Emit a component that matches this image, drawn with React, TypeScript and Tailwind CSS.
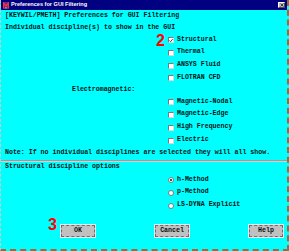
import React from 'react'

const txt = "font-['Liberation_Mono',monospace] font-bold text-[6.6px] leading-none text-[#001414] whitespace-nowrap"

const CheckBox = ({ checked = false }: { checked?: boolean }) => (
  <span className="w-[6px] h-[6px] bg-white border-t border-l border-[#7a7a7a] border-r border-b border-r-[#d8d8d8] border-b-[#d8d8d8] flex items-center justify-center shrink-0">
    {checked && (
      <svg width="5" height="5" viewBox="0 0 5 5">
        <path d="M0.5 2.5 L2 4 L4.5 0.8" stroke="#101010" strokeWidth="1" fill="none" />
      </svg>
    )}
  </span>
)

const Radio = ({ on = false }: { on?: boolean }) => (
  <span className="w-[6px] h-[6px] rounded-full bg-white border border-[#7a7a7a] flex items-center justify-center shrink-0">
    {on && <span className="w-[2px] h-[2px] rounded-full bg-[#101010]" />}
  </span>
)

const Option = ({ label, className, children }: { label: string; className: string; children: React.ReactNode }) => (
  <div className={`flex items-center pl-[167px] gap-[3px] ${className}`}>
    {children}
    <span className={txt}>{label}</span>
  </div>
)

const Btn = ({ label }: { label: string }) => (
  <button className="w-[34px] h-[12px] bg-[#c0c0c0] border border-dashed border-[#6e6e6e] outline outline-1 outline-[#e8e8e8] flex items-center justify-center">
    <span className={txt}>{label}</span>
  </button>
)

export default function App() {
  return (
    <div className="w-[289px] h-[251px] relative overflow-hidden bg-[#00ffff] flex flex-col border-l border-dashed border-l-[#c8c8c8] border-r-2 border-r-[#a06838] border-b-2 border-b-[#9a6a3a]">
      {/* title bar */}
      <div className="h-[10px] bg-[#000080] flex items-center pl-[2px] pr-[2px] shrink-0">
        <svg width="6" height="7" viewBox="0 0 6 7" className="shrink-0">
          <rect width="6" height="7" fill="#6a2a8a" />
          <path d="M0.5 6 L0.5 1 L3 4 L5.5 1 L5.5 6" stroke="#ff3030" strokeWidth="1.2" fill="none" />
          <rect x="2.5" y="5" width="1" height="1.5" fill="#ffd000" />
        </svg>
        <span className="ml-[2px] font-['Liberation_Sans',sans-serif] font-bold text-[5.6px] leading-none text-white whitespace-nowrap">
          Preferences for GUI Filtering
        </span>
        <span className="ml-auto w-[7px] h-[6px] bg-[#c0c0c0] border-t border-l border-white border-r border-b border-r-[#505050] border-b-[#505050] flex items-center justify-center">
          <svg width="4" height="4" viewBox="0 0 4 4">
            <path d="M0.5 0.5 L3.5 3.5 M3.5 0.5 L0.5 3.5" stroke="#303030" strokeWidth="0.9" />
          </svg>
        </span>
      </div>

      <div className="h-[12px] flex items-center pl-[4px]">
        <span className={txt}>[KEYWIL/PMETH] Preferences for GUI Filtering</span>
      </div>
      <div className="h-[12px] flex items-center pl-[4px]">
        <span className={txt}>Individual discipline(s) to show in the GUI</span>
      </div>

      <Option label="Structural" className="h-[12px]"><CheckBox checked /></Option>
      <Option label="Thermal" className="h-[13px]"><CheckBox /></Option>
      <Option label="ANSYS Fluid" className="h-[13px]"><CheckBox /></Option>
      <Option label="FLOTRAN CFD" className="h-[12px]"><CheckBox /></Option>
      <div className="h-[12px] flex items-center pl-[71px]">
        <span className={txt}>Electromagnetic:</span>
      </div>
      <Option label="Magnetic-Nodal" className="h-[12px]"><CheckBox /></Option>
      <Option label="Magnetic-Edge" className="h-[13px]"><CheckBox /></Option>
      <Option label="High Frequency" className="h-[13px]"><CheckBox /></Option>
      <Option label="Electric" className="h-[13px]"><CheckBox /></Option>
      <div className="h-[12px] flex items-center pl-[4px]">
        <span className={txt}>Note: If no individual disciplines are selected they will all show.</span>
      </div>

      <div className="h-[2px] mt-[1px] border-t border-[#9c9c9c] border-b border-b-[#d0d0d0]" />

      <div className="h-[11px] flex items-center pl-[4px]">
        <span className={txt}>Structural discipline options</span>
      </div>
      <div className="h-[1px]" />
      <Option label="h-Method" className="h-[12px]"><Radio on /></Option>
      <Option label="p-Method" className="h-[13px]"><Radio /></Option>
      <Option label="LS-DYNA Explicit" className="h-[13px]"><Radio /></Option>

      <div className="mt-[13px] flex pl-[60px] gap-[60px]">
        <Btn label="OK" />
        <Btn label="Cancel" />
        <Btn label="Help" />
      </div>

      {/* annotations */}
      <span className="absolute left-[155px] top-[33px] font-['Liberation_Sans',sans-serif] font-bold text-[16px] leading-none text-[#ff0000]">2</span>
      <span className="absolute left-[47px] top-[217px] font-['Liberation_Sans',sans-serif] font-bold text-[16px] leading-none text-[#ff0000]">3</span>
    </div>
  )
}
